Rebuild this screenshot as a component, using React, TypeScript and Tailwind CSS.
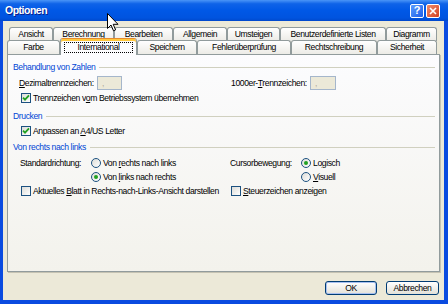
import React from "react";

const U = ({ children }: { children: React.ReactNode }) => (
  <span className="underline underline-offset-[1px] decoration-[1px]">{children}</span>
);

function Checkbox({ checked }: { checked?: boolean }) {
  return (
    <span className="w-[10px] h-[10px] border border-[#1c5180] bg-gradient-to-br from-[#dcdcd7] to-white flex items-center justify-center shrink-0">
      {checked && (
        <svg width="8" height="8" viewBox="0 0 8 8">
          <path d="M1 3.6 L3 5.6 L7 1.4" stroke="#21a121" strokeWidth="1.8" fill="none" />
        </svg>
      )}
    </span>
  );
}

function Radio({ checked }: { checked?: boolean }) {
  return (
    <span className="w-[10px] h-[10px] rounded-full border border-[#1c5180] bg-gradient-to-br from-[#dcdcd7] to-white flex items-center justify-center shrink-0">
      {checked && <span className="w-[4px] h-[4px] rounded-full bg-[#21a121]" />}
    </span>
  );
}

function Header({ title }: { title: string }) {
  return (
    <div className="h-[14px] flex items-center pl-[5px] pr-[4px]">
      <span className="text-[#0046d5]">{title}</span>
      <div className="flex-1 ml-[4px] h-px bg-[#d0d0bf]" />
    </div>
  );
}

function Tab({ label, w }: { label: string; w: string }) {
  return (
    <div
      className={`${w} h-[14px] shrink-0 border-t border-x border-[#919b9c] rounded-t-[3px] bg-gradient-to-b from-white to-[#ecebe6] flex items-center justify-center text-black`}
    >
      {label}
    </div>
  );
}

function Input({ w }: { w: string }) {
  return (
    <span className={`${w} h-[14px] border border-[#a5b6cb] bg-[#ece9d8] flex items-center pl-[4px] text-[#aca899] shrink-0`}>
      ,
    </span>
  );
}

export default function App() {
  return (
    <div className="w-[448px] h-[304px] relative overflow-hidden bg-[#0a4be0] flex flex-col font-['Liberation_Sans',Arial,sans-serif] text-[8.6px] tracking-[-0.4px] leading-none text-black select-none whitespace-nowrap">
      {/* Title bar */}
      <div className="h-[21px] shrink-0 flex items-center bg-[linear-gradient(to_bottom,#4a95f7_0%,#0f63e8_18%,#0058e6_50%,#0054df_85%,#0048cc_100%)] pl-[5px] pr-[8px]">
        <span className="text-white font-bold text-[10.5px] tracking-[-0.5px] [text-shadow:1px_1px_0_#0a1e8a]">Optionen</span>
        <div className="flex-1" />
        <div className="w-[14px] h-[14px] rounded-[2px] border border-white bg-gradient-to-br from-[#5a9bff] to-[#1e5ee8] flex items-center justify-center text-white font-bold text-[11px] tracking-normal">
          ?
        </div>
        <div className="w-[14px] h-[14px] ml-[2px] rounded-[2px] border border-white bg-gradient-to-br from-[#ee8a6a] to-[#d23f1c] flex items-center justify-center">
          <svg width="8" height="8" viewBox="0 0 8 8">
            <path d="M1 1 L7 7 M7 1 L1 7" stroke="white" strokeWidth="1.6" />
          </svg>
        </div>
      </div>

      {/* Body */}
      <div className="flex-1 ml-[3px] mr-[4px] mb-[4px] bg-[#ece9d8] flex flex-col px-[4px] pt-[6px]">
        {/* Tab row 1 */}
        <div className="flex ml-[2px]">
          <Tab label="Ansicht" w="w-[44px]" />
          <Tab label="Berechnung" w="w-[61px]" />
          <Tab label="Bearbeiten" w="w-[59px]" />
          <Tab label="Allgemein" w="w-[54px]" />
          <Tab label="Umsteigen" w="w-[53px]" />
          <Tab label="Benutzerdefinierte Listen" w="w-[106px]" />
          <Tab label="Diagramm" w="w-[51px]" />
        </div>
        {/* Tab row 2 */}
        <div className="flex -mt-px h-[14px] items-start">
          <Tab label="Farbe" w="w-[53px]" />
          <div className="w-[77px] h-[17px] -mt-[2px] shrink-0 relative z-10 border-x border-t border-x-[#919b9c] border-t-[#e68b2c] rounded-t-[3px] bg-[#fcfcfe] shadow-[inset_0_2px_0_#ffc83c] flex items-start justify-center pt-[3px]">
            <span className="border border-dotted border-black h-[11px] w-[69px] flex items-center justify-center">
              International
            </span>
          </div>
          <Tab label="Speichern" w="w-[60px]" />
          <Tab label="Fehlerüberprüfung" w="w-[94px]" />
          <Tab label="Rechtschreibung" w="w-[86px]" />
          <Tab label="Sicherheit" w="w-[60px]" />
        </div>

        {/* Panel */}
        <div className="h-[218px] shrink-0 border border-[#919b9c] bg-gradient-to-b from-[#fcfcfe] to-[#f3f2ec] shadow-[1px_1px_0_#c5c2b2] flex flex-col pt-[5px]">
          <Header title="Behandlung von Zahlen" />
          <div className="h-[14px] mt-[2px] flex items-center">
            <div className="w-[223px] pl-[11px] flex items-center gap-[2px]">
              <span className="w-[76px]"><U>D</U>ezimaltrennzeichen:</span>
              <Input w="w-[25px]" />
            </div>
            <div className="flex items-center gap-[2px]">
              <span className="w-[77px]">1000er-<U>T</U>rennzeichen:</span>
              <Input w="w-[26px]" />
            </div>
          </div>
          <div className="h-[14px] mt-[1px] flex items-center pl-[13px] gap-[2px]">
            <Checkbox checked />
            <span>Trennzeichen v<U>o</U>m Betriebssystem übernehmen</span>
          </div>

          <div className="mt-[4px]">
            <Header title="Drucken" />
          </div>
          <div className="h-[14px] mt-[1px] flex items-center pl-[13px] gap-[2px]">
            <Checkbox checked />
            <span>Anpassen an <U>A</U>4/US Letter</span>
          </div>

          <div className="mt-[2px]">
            <Header title="Von rechts nach links" />
          </div>
          <div className="h-[14px] mt-[2px] flex items-center">
            <div className="w-[222px] pl-[12px] flex items-center">
              <span className="w-[71px]">Standardrichtung:</span>
              <Radio />
              <span className="ml-[2px]">Von <U>r</U>echts nach links</span>
            </div>
            <div className="flex items-center">
              <span className="w-[71px]">Cursorbewegung:</span>
              <Radio checked />
              <span className="ml-[2px]">Lo<U>g</U>isch</span>
            </div>
          </div>
          <div className="h-[14px] flex items-center">
            <div className="w-[222px] pl-[83px] flex items-center">
              <Radio checked />
              <span className="ml-[2px]">Von <U>l</U>inks nach rechts</span>
            </div>
            <div className="pl-[71px] flex items-center">
              <Radio />
              <span className="ml-[2px]"><U>V</U>isuell</span>
            </div>
          </div>
          <div className="h-[14px] flex items-center">
            <div className="w-[223px] pl-[13px] flex items-center gap-[2px]">
              <Checkbox />
              <span>Aktuelles <U>B</U>latt in Rechts-nach-Links-Ansicht darstellen</span>
            </div>
            <div className="flex items-center gap-[2px]">
              <Checkbox />
              <span><U>S</U>teuerzeichen anzeigen</span>
            </div>
          </div>
        </div>

        {/* Buttons */}
        <div className="flex justify-end mt-[9px] gap-[9px] pr-[1px]">
          <button className="w-[52px] h-[14px] rounded-[3px] border border-[#003c74] bg-gradient-to-b from-white to-[#e3e1d8] shadow-[inset_0_0_0_1px_#a8c0f0] flex items-center justify-center text-black">
            OK
          </button>
          <button className="w-[53px] h-[14px] rounded-[3px] border border-[#003c74] bg-gradient-to-b from-white to-[#e3e1d8] flex items-center justify-center text-black">
            Abbrechen
          </button>
        </div>
      </div>

      {/* Mouse cursor */}
      <svg className="absolute left-[107px] top-[13px]" width="12" height="19" viewBox="0 0 12 19">
        <path d="M0.5 0.5 L0.5 15.5 L4 12 L6.5 17.8 L8.6 16.9 L6.2 11.3 L11 11.3 Z" fill="white" stroke="black" strokeWidth="1" />
      </svg>
    </div>
  );
}
